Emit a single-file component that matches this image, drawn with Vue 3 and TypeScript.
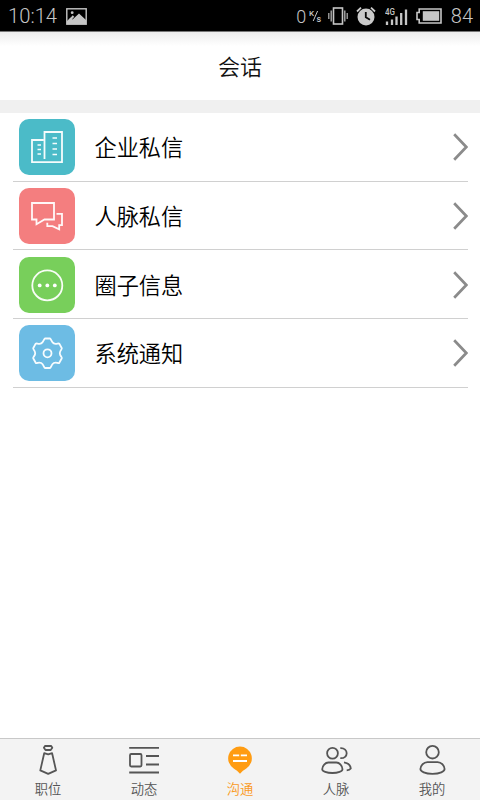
<script setup lang="ts">
type RowIcon = 'company' | 'contacts' | 'circle' | 'system'
type TabIcon = 'job' | 'feed' | 'chat' | 'people' | 'me'

const rows: { icon: RowIcon; label: string }[] = [
  { icon: 'company', label: '企业私信' },
  { icon: 'contacts', label: '人脉私信' },
  { icon: 'circle', label: '圈子信息' },
  { icon: 'system', label: '系统通知' },
]

const tabs: { icon: TabIcon; label: string; active?: boolean }[] = [
  { icon: 'job', label: '职位' },
  { icon: 'feed', label: '动态' },
  { icon: 'chat', label: '沟通', active: true },
  { icon: 'people', label: '人脉' },
  { icon: 'me', label: '我的' },
]
</script>

<template>
  <div class="screen">
    <div class="status">
      <span class="time">10:14</span>
      <svg class="picture" width="21" height="17" viewBox="0 0 21 17">
        <rect x="0.8" y="0.8" width="19.4" height="15.4" fill="none" stroke="#c6c6c6" stroke-width="1.4" />
        <path d="M1 16V13L4.5 9.5 6.5 11.5 13 5.5 20 12V16Z" fill="#c6c6c6" />
        <circle cx="6.2" cy="4.7" r="1.4" fill="#c6c6c6" />
        <path d="M4 12L7.5 8" stroke="#c6c6c6" stroke-width="2" />
      </svg>
      <span class="spacer"></span>
      <span class="speed">0</span>
      <svg class="unit" width="13" height="16" viewBox="0 0 13 16">
        <text x="0" y="8" font-size="8">K</text>
        <path d="M8.6 3L4.2 13" stroke="#c6c6c6" stroke-width="1" />
        <text x="7.6" y="13.8" font-size="9">s</text>
      </svg>
      <svg class="vibrate" width="20" height="18" viewBox="0 0 20 18">
        <rect x="5.5" y="1" width="9" height="16" fill="none" stroke="#c6c6c6" stroke-width="1.6" />
        <path d="M3.2 3.5V14.5M16.8 3.5V14.5" stroke="#aaa" stroke-width="1.4" />
        <path d="M0.8 6V12M19.2 6V12" stroke="#aaa" stroke-width="1.3" />
      </svg>
      <svg class="alarm" width="20" height="20" viewBox="0 0 20 20">
        <circle cx="10" cy="11" r="8.5" fill="#cacaca" />
        <path d="M1 5.5L5 1.7M15 1.7L19 5.5" stroke="#cacaca" stroke-width="1.8" />
        <path d="M9.8 6V11.3L14 13.7" fill="none" stroke="#080808" stroke-width="1.8" />
      </svg>
      <svg class="signal" width="23" height="19" viewBox="0 0 23 19">
        <text x="0" y="7.6" font-size="8.5" textLength="10" lengthAdjust="spacingAndGlyphs">4G</text>
        <path d="M2 14.5V18M7 12.5V18M11.5 9.5V18M16.2 6V18M21 2.5V18" stroke="#c6c6c6" stroke-width="2.3" />
      </svg>
      <svg class="battery" width="26" height="16" viewBox="0 0 26 16">
        <path d="M3.2 1H25V15H3.2V11.5H1V4.5H3.2Z" fill="none" stroke="#c6c6c6" stroke-width="1.6" />
        <rect x="6.8" y="3.2" width="16.4" height="9.6" fill="#c6c6c6" />
      </svg>
      <span class="level">84</span>
    </div>

    <header class="title">会话</header>

    <main class="list">
      <div v-for="row in rows" :key="row.icon" class="row">
        <div class="tile" :class="row.icon">
          <svg width="56" height="56" viewBox="0 0 56 56" fill="none" stroke="#fff" stroke-opacity="0.95" stroke-width="1.8">
            <template v-if="row.icon === 'company'">
              <path d="M25.5 40V13H43V43.2H13V21H24.5" />
              <path d="M33.5 19H38M33.5 24.5H38M33.5 30H38M33.5 35.5H38M18.5 26H22M18.5 30.5H22M18.5 35H22" stroke-width="1.6" />
            </template>
            <template v-else-if="row.icon === 'contacts'">
              <path d="M13 15H35V31.5H25.5L17.5 36.2V31.5H13Z" />
              <path d="M37.5 25.8H43V37.2H40.2V41.4L33.5 38.2H28.3V34.8" />
            </template>
            <template v-else-if="row.icon === 'circle'">
              <circle cx="28.3" cy="28.4" r="15" />
              <g fill="#fff" stroke="none">
                <circle cx="20.7" cy="28.4" r="1.9" /><circle cx="28.3" cy="28.4" r="1.9" /><circle cx="35.8" cy="28.4" r="1.9" />
              </g>
            </template>
            <template v-else>
              <path d="M26 13.5H31C32 13.5 32.2 17 34.8 18.4C37 19.6 39.5 17.8 40.3 18.6L42.8 23.2C43.3 24.3 40.8 25.3 40.8 28.2S43.3 32 42.8 33.2L40.3 37.8C39.5 38.7 37 36.8 34.8 38C32.2 39.4 32 43 31 43H26C25 43 24.8 39.4 22.2 38C20 36.8 17.5 38.7 16.7 37.8L14.2 33.2C13.7 32 16.2 31.1 16.2 28.2S13.7 24.3 14.2 23.2L16.7 18.6C17.5 17.8 20 19.6 22.2 18.4C24.8 17 25 13.5 26 13.5Z" stroke-linejoin="round" />
              <circle cx="28.5" cy="28.3" r="4" />
            </template>
          </svg>
        </div>
        <span class="name">{{ row.label }}</span>
        <svg class="arrow" width="16" height="30" viewBox="0 0 16 30">
          <path d="M2.2 2.2L14.3 15 2.2 27.8" fill="none" stroke="#8b8b8b" stroke-width="2.7" />
        </svg>
      </div>
    </main>

    <nav class="tabs">
      <div v-for="tab in tabs" :key="tab.icon" class="tab" :class="{ active: tab.active }">
        <svg width="34" height="34" viewBox="0 0 34 34" fill="none" stroke="#555" stroke-width="1.8" stroke-linejoin="round">
          <template v-if="tab.icon === 'job'">
            <path d="M14 4H20.2L21.3 5.8 19.7 8H14.5L12.9 5.8Z" />
            <path d="M13.2 11.2L17.2 12.4 21.1 11.2 25 28.4 17.2 31.9 9.3 28.4Z" />
          </template>
          <template v-else-if="tab.icon === 'feed'">
            <path d="M2.2 5.8H32M19 14H32M19 22.5H32M2.2 30.5H32" />
            <rect x="3" y="12" width="11.5" height="12.5" rx="1.2" />
          </template>
          <template v-else-if="tab.icon === 'chat'">
            <path d="M17 4.6A11.8 11.8 0 0 1 23.3 26.4C20.8 28 19 29.2 17 31.8 15 29.2 13.2 28 10.7 26.4A11.8 11.8 0 0 1 17 4.6Z" fill="#ff9c12" stroke="none" />
            <path d="M10 13.4H16.2M17.8 13.4H24M10 19H24" stroke="#fff" stroke-width="1.8" />
          </template>
          <template v-else-if="tab.icon === 'people'">
            <circle cx="13.5" cy="11.2" r="5.4" />
            <path d="M9.4 20.5H17.4C20.4 20.5 23.5 23.8 23.5 27.2C23.5 29.2 19 31 13.4 31S3.2 29.2 3.2 27.2C3.2 23.8 6.4 20.5 9.4 20.5Z" />
            <path d="M21.3 6.2C29.8 5.6 29.8 16.8 21.3 16.2M25 20.3C29.2 21 31.5 23.3 31.8 26.5Q30.7 28 27.7 28.3" />
          </template>
          <template v-else>
            <circle cx="17.5" cy="10.2" r="6.3" />
            <path d="M12.4 20.1H22.6C26.4 20.1 29.6 23.8 29.6 27.1C29.6 29.5 24.8 31.8 17.5 31.8S5.4 29.5 5.4 27.1C5.4 23.8 8.6 20.1 12.4 20.1Z" />
          </template>
        </svg>
        <span class="caption">{{ tab.label }}</span>
      </div>
    </nav>
  </div>
</template>

<style>
body {
  margin: 0;
  background: #fff;
}
</style>

<style scoped>
.screen {
  display: flex;
  flex-direction: column;
  width: 480px;
  height: 800px;
  overflow: hidden;
  background: #fff;
  font-family: "Noto Sans CJK SC", sans-serif;
  font-weight: 350;
}
.status {
  display: flex;
  align-items: center;
  box-sizing: border-box;
  height: 32px;
  flex: none;
  padding: 1px 7px 0 8px;
  border-bottom: 1px solid #777;
  background: #000;
  color: #c6c6c6;
  font: 300 20.2px/31px Roboto, sans-serif;
}
.status text {
  fill: #c6c6c6;
  font-family: Roboto, sans-serif;
  font-weight: 500;
}
.time,
.level {
  padding-top: 1px;
}
.picture {
  margin-left: 8.5px;
}
.spacer {
  flex: 1;
}
.speed {
  font-size: 18px;
}
.unit {
  margin-left: 3px;
}
.vibrate {
  margin-left: 6px;
}
.alarm {
  margin-left: 8px;
}
.signal {
  margin-left: 9px;
}
.battery {
  margin-left: 8px;
}
.level {
  margin-left: 8.5px;
  font-size: 20px;
}
.title {
  box-sizing: border-box;
  height: 81px;
  flex: none;
  border-bottom: 13px solid #f0f0f0;
  background: linear-gradient(#ececec, #fff 14px);
  color: #111;
  font-size: 22px;
  line-height: 66px;
  text-align: center;
}
.list {
  flex: 1;
  padding: 0 12px 0 13px;
}
.row {
  display: flex;
  align-items: center;
  box-sizing: border-box;
  height: 68.67px;
  padding-top: 0.8px;
  border-bottom: 1px solid #d0d0d0;
}
.tile {
  width: 56px;
  height: 56px;
  margin-left: 6px;
  border-radius: 10px;
}
.tile svg {
  display: block;
}
.company {
  background: #4bbbc8;
}
.contacts {
  background: #f47e7f;
}
.circle {
  background: #78cf5b;
}
.system {
  background: #6dbce4;
}
.name {
  flex: 1;
  margin-left: 19.5px;
  padding-bottom: 2px;
  color: #000;
  font-size: 22.2px;
  line-height: 32px;
}
.tabs {
  display: flex;
  box-sizing: border-box;
  height: 62px;
  flex: none;
  border-top: 1.5px solid #c8c8c8;
  background: #f3f3f3;
}
.tab {
  display: flex;
  flex: 1;
  flex-direction: column;
  align-items: center;
  padding-top: 3px;
  color: #555;
}
.caption {
  font-size: 13.3px;
  line-height: 20px;
  margin-top: 3px;
}
.active {
  color: #fa9a1c;
}
</style>
